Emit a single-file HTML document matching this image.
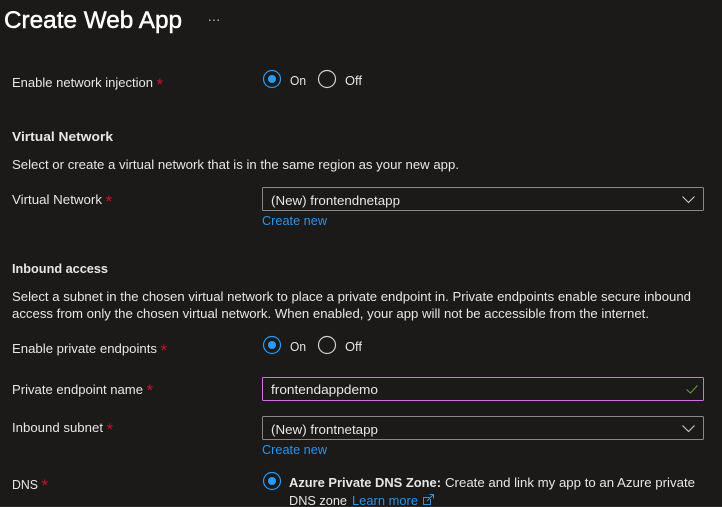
<!DOCTYPE html>
<html><head><meta charset="utf-8">
<style>
html,body{margin:0;padding:0;background:#1b1a19;width:722px;height:507px;overflow:hidden}
svg{display:block}
text{font-family:"Liberation Sans",sans-serif;font-size:13px;fill:#e6e6e6}
.b{font-weight:bold}
.l{fill:#2b93ea}
.r{fill:#c8102e;font-size:17px}
</style></head><body>
<svg width="722" height="507" viewBox="0 0 722 507" xmlns="http://www.w3.org/2000/svg">
<rect width="722" height="507" fill="#1b1a19"/>
<rect y="506" width="722" height="1" fill="#2a2a2a"/>

<text x="4" y="28" textLength="178" lengthAdjust="spacingAndGlyphs" stroke="#fff" stroke-width="0.45" style="font-size:24px;fill:#fff">Create Web App</text>
<g fill="#a8a6a4"><rect x="209" y="19.5" width="1.5" height="1.5"/><rect x="213.2" y="19.5" width="1.5" height="1.5"/><rect x="217.5" y="19.5" width="1.5" height="1.5"/></g>

<text x="12" y="87" textLength="141" lengthAdjust="spacingAndGlyphs">Enable network injection</text>
<text class="r" x="156.5" y="90">*</text>
<circle cx="272" cy="79" r="8.5" fill="none" stroke="#2899f5" stroke-width="1.2"/><circle cx="272" cy="79" r="4" fill="#2899f5"/>
<text x="290" y="85" textLength="16" lengthAdjust="spacingAndGlyphs">On</text>
<circle cx="327" cy="79" r="8.5" fill="none" stroke="#d2d0ce" stroke-width="1.2"/>
<text x="345" y="85" textLength="17" lengthAdjust="spacingAndGlyphs">Off</text>

<text class="b" x="12" y="141" textLength="101" lengthAdjust="spacingAndGlyphs">Virtual Network</text>
<text x="12" y="169" textLength="447" lengthAdjust="spacingAndGlyphs">Select or create a virtual network that is in the same region as your new app.</text>
<text x="12" y="204" textLength="90" lengthAdjust="spacingAndGlyphs">Virtual Network</text>
<text class="r" x="105.5" y="207">*</text>
<rect x="262.5" y="187.5" width="441" height="23" rx="1" fill="none" stroke="#8a8886"/>
<text x="271" y="205" textLength="129" lengthAdjust="spacingAndGlyphs">(New) frontendnetapp</text>
<path d="M682.5 196.5L688.5 202.5L694.5 196.5" fill="none" stroke="#d2d0ce" stroke-width="1"/>
<text class="l" x="262" y="225" textLength="65" lengthAdjust="spacingAndGlyphs">Create new</text>

<text class="b" x="12" y="273" textLength="96" lengthAdjust="spacingAndGlyphs">Inbound access</text>
<text x="12" y="301" textLength="679" lengthAdjust="spacingAndGlyphs">Select a subnet in the chosen virtual network to place a private endpoint in. Private endpoints enable secure inbound</text>
<text x="12" y="318" textLength="637" lengthAdjust="spacingAndGlyphs">access from only the chosen virtual network. When enabled, your app will not be accessible from the internet.</text>

<text x="12" y="353" textLength="145" lengthAdjust="spacingAndGlyphs">Enable private endpoints</text>
<text class="r" x="160.5" y="356">*</text>
<circle cx="272" cy="345" r="8.5" fill="none" stroke="#2899f5" stroke-width="1.2"/><circle cx="272" cy="345" r="4" fill="#2899f5"/>
<text x="290" y="351" textLength="16" lengthAdjust="spacingAndGlyphs">On</text>
<circle cx="327" cy="345" r="8.5" fill="none" stroke="#d2d0ce" stroke-width="1.2"/>
<text x="345" y="351" textLength="17" lengthAdjust="spacingAndGlyphs">Off</text>

<text x="12" y="394" textLength="131" lengthAdjust="spacingAndGlyphs">Private endpoint name</text>
<text class="r" x="146.5" y="396">*</text>
<rect x="262.5" y="377.5" width="441" height="23" rx="1" fill="none" stroke="#d66ce6"/>
<text x="271" y="394" textLength="107" lengthAdjust="spacingAndGlyphs">frontendappdemo</text>
<path d="M686.5 389.5L690.5 393L697.5 385.5" fill="none" stroke="#6b9a3c" stroke-width="1.1"/>

<text x="12" y="432" textLength="91" lengthAdjust="spacingAndGlyphs">Inbound subnet</text>
<text class="r" x="106.5" y="435">*</text>
<rect x="262.5" y="416.5" width="441" height="23" rx="1" fill="none" stroke="#8a8886"/>
<text x="271" y="434" textLength="107" lengthAdjust="spacingAndGlyphs">(New) frontnetapp</text>
<path d="M682.5 425.5L688.5 431.5L694.5 425.5" fill="none" stroke="#d2d0ce" stroke-width="1"/>
<text class="l" x="262" y="454" textLength="65" lengthAdjust="spacingAndGlyphs">Create new</text>

<text x="12" y="489" textLength="26" lengthAdjust="spacingAndGlyphs">DNS</text>
<text class="r" x="41.5" y="491">*</text>
<circle cx="272" cy="481" r="8.5" fill="none" stroke="#2899f5" stroke-width="1.2"/><circle cx="272" cy="481" r="4" fill="#2899f5"/>
<text class="b" x="289" y="487" textLength="152" lengthAdjust="spacingAndGlyphs">Azure Private DNS Zone:</text>
<text x="445" y="487" textLength="250" lengthAdjust="spacingAndGlyphs">Create and link my app to an Azure private</text>
<text x="289" y="505" textLength="58" lengthAdjust="spacingAndGlyphs">DNS zone</text>
<text class="l" x="352" y="505" textLength="66" lengthAdjust="spacingAndGlyphs">Learn more</text>
<path d="M429.5 497.5H423.5V504.5H430.5V499M427 501L433.5 494.5M429.5 494.5H433.5V498.5" fill="none" stroke="#2b93ea" stroke-width="1"/>
</svg>
</body></html>
